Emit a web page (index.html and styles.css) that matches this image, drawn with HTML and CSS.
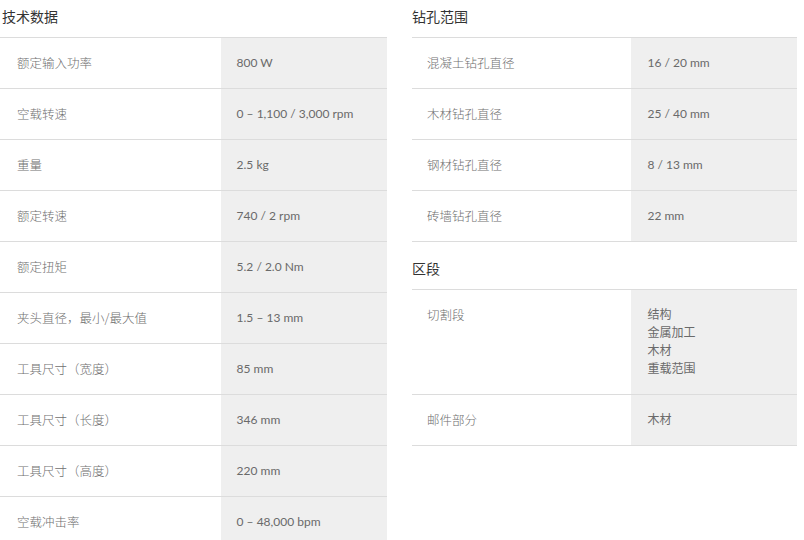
FILE: index.html
```html
<!DOCTYPE html>
<html lang="zh">
<head>
<meta charset="utf-8">
<link rel="stylesheet" href="styles.css">
</head>
<body>
<div class="page">
  <div class="col col-left">
    <section class="section">
      <h2 class="title first">技术数据</h2>
      <div class="table">
        <div class="row"><div class="label">额定输入功率</div><div class="value">800 W</div></div>
        <div class="row"><div class="label">空载转速</div><div class="value">0 – 1,100 / 3,000 rpm</div></div>
        <div class="row"><div class="label">重量</div><div class="value">2.5 kg</div></div>
        <div class="row"><div class="label">额定转速</div><div class="value">740 / 2 rpm</div></div>
        <div class="row"><div class="label">额定扭矩</div><div class="value">5.2 / 2.0 Nm</div></div>
        <div class="row"><div class="label">夹头直径，最小/最大值</div><div class="value">1.5 – 13 mm</div></div>
        <div class="row"><div class="label">工具尺寸（宽度）</div><div class="value">85 mm</div></div>
        <div class="row"><div class="label">工具尺寸（长度）</div><div class="value">346 mm</div></div>
        <div class="row"><div class="label">工具尺寸（高度）</div><div class="value">220 mm</div></div>
        <div class="row"><div class="label">空载冲击率</div><div class="value">0 – 48,000 bpm</div></div>
      </div>
    </section>
  </div>
  <div class="col col-right">
    <section class="section">
      <h2 class="title first">钻孔范围</h2>
      <div class="table">
        <div class="row"><div class="label">混凝土钻孔直径</div><div class="value">16 / 20 mm</div></div>
        <div class="row"><div class="label">木材钻孔直径</div><div class="value">25 / 40 mm</div></div>
        <div class="row"><div class="label">钢材钻孔直径</div><div class="value">8 / 13 mm</div></div>
        <div class="row"><div class="label">砖墙钻孔直径</div><div class="value">22 mm</div></div>
      </div>
    </section>
    <section class="section">
      <h2 class="title">区段</h2>
      <div class="table">
        <div class="row"><div class="label">切割段</div><div class="value">结构<br>金属加工<br>木材<br>重载范围</div></div>
        <div class="row"><div class="label">邮件部分</div><div class="value">木材</div></div>
      </div>
    </section>
  </div>
</div>
</body>
</html>
```
FILE: styles.css
```css
html, body {
  margin: 0;
  padding: 0;
  background: #fff;
}
body {
  font-family: Lato, "Noto Sans CJK SC", sans-serif;
  color: #666;
}
.page {
  display: flex;
  gap: 25px;
  width: 797px;
}
.col-left {
  width: 387px;
}
.col-right {
  width: 385px;
}
.title {
  margin: 16px 0 11px 2px;
  font-size: 14px;
  line-height: 20px;
  font-weight: normal;
  color: #333;
  font-family: "Noto Sans CJK SC", sans-serif;
}
.title.first {
  margin-top: 6px;
}
.col-right .title {
  margin-left: 0;
}
.table {
  border-bottom: 1px solid #dcdcdc;
}
.row {
  display: grid;
  grid-template-columns: 57% 1fr;
  border-top: 1px solid #dcdcdc;
}
.label, .value {
  padding: 16px;
  font-size: 12.5px;
  line-height: 18px;
}
.label {
  padding-left: 17px;
  font-family: "Noto Sans CJK SC", sans-serif;
  font-weight: 300;
  color: #6f6f6f;
}
.col-right .label {
  padding-left: 15px;
}
.value {
  background: #efefef;
  color: #6a6a6a;
  font-size: 12px;
  font-weight: 400;
  font-family: Lato, "Noto Sans CJK SC", sans-serif;
}
```
